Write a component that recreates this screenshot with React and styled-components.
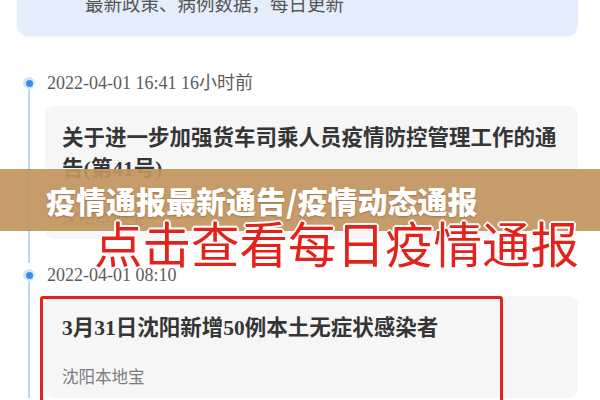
import React from 'react'
import styled, { createGlobalStyle } from 'styled-components'

const GlobalStyle = createGlobalStyle`
  html, body {
    margin: 0;
    padding: 0;
    background: #fff;
    overflow: hidden;
  }
  body {
    font-family: 'Noto Sans CJK SC', sans-serif;
  }
`

const Page = styled.div`
  position: relative;
  width: 600px;
  height: 400px;
  overflow: hidden;
  padding: 0 22px 0 17px;
  box-sizing: border-box;
`

const IntroCard = styled.div`
  margin-top: -20px;
  padding: 11px 20px 21px 68px;
  background: #e3edfb;
  border-radius: 0 0 12px 12px;
  box-shadow: 0 1px 3px rgba(60, 90, 140, 0.08);
`

const IntroText = styled.div`
  font-family: 'Noto Sans CJK SC', sans-serif;
  font-size: 18.5px;
  line-height: 24px;
  color: #555;
`

const Timeline = styled.div`
  margin-top: 35px;
`

const Item = styled.div`
  display: flex;
`

const Rail = styled.div`
  flex: 0 0 24px;
  display: flex;
  flex-direction: column;
  align-items: center;
  padding-top: 6px;
  margin-right: 4px;
`

const Dot = styled.span`
  width: 12px;
  height: 12px;
  border-radius: 50%;
  background: #d3e5fa;
  display: flex;
  align-items: center;
  justify-content: center;

  &::after {
    content: '';
    width: 7px;
    height: 7px;
    border-radius: 50%;
    background: #3b8bef;
  }
`

const Line = styled.span`
  flex: 1;
  width: 2px;
  background: #bcd8f6;
`

const Body = styled.div`
  flex: 1;
  padding-bottom: ${p => p.$last ? 0 : 24}px;
`

const Stamp = styled.div`
  font-family: 'Liberation Serif', 'Noto Sans CJK SC', serif;
  font-size: 18px;
  line-height: 24px;
  color: #5c5c5c;
  padding-left: 2px;
`

const Card = styled.div`
  position: relative;
  margin-top: ${p => p.$top}px;
  background: #f6f6f7;
  border-radius: 9px;
  padding: 17px 16px 10px 17px;
`

const Title = styled.div`
  font-family: 'Liberation Serif', 'Noto Sans CJK SC', serif;
  font-weight: 700;
  font-size: 21.5px;
  line-height: 31px;
  color: #353535;
`

const Source = styled.div`
  margin-top: 20px;
  font-family: 'Noto Sans CJK SC', sans-serif;
  font-size: 16.5px;
  line-height: 24px;
  color: #7c7c7c;
`

/* red marker frame drawn over the highlighted card */
const Marker = styled.div`
  position: absolute;
  left: -5px;
  top: 0;
  width: 463px;
  height: 140px;
  border: 3px solid #e2251c;
  border-radius: 3px;
  box-sizing: border-box;
`

const Banner = styled.div`
  position: absolute;
  left: 0;
  right: 0;
  top: 169px;
  height: 62px;
  background: rgba(194, 148, 96, 0.93);
  display: flex;
  align-items: center;
  padding-left: 46px;
  font-family: 'Noto Sans CJK SC', sans-serif;
  font-weight: 900;
  font-size: 30px;
  color: #fff;
  text-shadow: 0 1px 2px rgba(80, 50, 20, 0.35);
`

const Callout = styled.div`
  position: absolute;
  left: 94px;
  top: 212px;
  font-family: 'Noto Sans CJK SC', sans-serif;
  font-weight: 400;
  font-size: 48.5px;
  line-height: 60px;
  color: #e3231b;
  white-space: nowrap;
  text-shadow:
    1px 1px 0 #fff, -1px -1px 0 #fff, 1px -1px 0 #fff, -1px 1px 0 #fff,
    2px 0 0 #fff, -2px 0 0 #fff, 0 2px 0 #fff, 0 -2px 0 #fff;
`

const posts = [
  {
    time: '2022-04-01 16:41 16小时前',
    title: '关于进一步加强货车司乘人员疫情防控管理工作的通告(第41号)',
    source: '沈阳本地宝',
    top: 11,
  },
  {
    time: '2022-04-01 08:10',
    title: '3月31日沈阳新增50例本土无症状感染者',
    source: '沈阳本地宝',
    top: 9,
    marked: true,
  },
]

export default function App() {
  return (
    <Page>
      <GlobalStyle />
      <IntroCard>
        <IntroText>最新政策、病例数据，每日更新</IntroText>
      </IntroCard>

      <Timeline>
        {posts.map((post, i) => (
          <Item key={i}>
            <Rail>
              <Dot />
              <Line />
            </Rail>
            <Body $last={i === posts.length - 1}>
              <Stamp>{post.time}</Stamp>
              <Card $top={post.top}>
                <Title>{post.title}</Title>
                <Source>{post.source}</Source>
                {post.marked && <Marker />}
              </Card>
            </Body>
          </Item>
        ))}
      </Timeline>

      <Banner>疫情通报最新通告/疫情动态通报</Banner>
      <Callout>点击查看每日疫情通报</Callout>
    </Page>
  )
}
